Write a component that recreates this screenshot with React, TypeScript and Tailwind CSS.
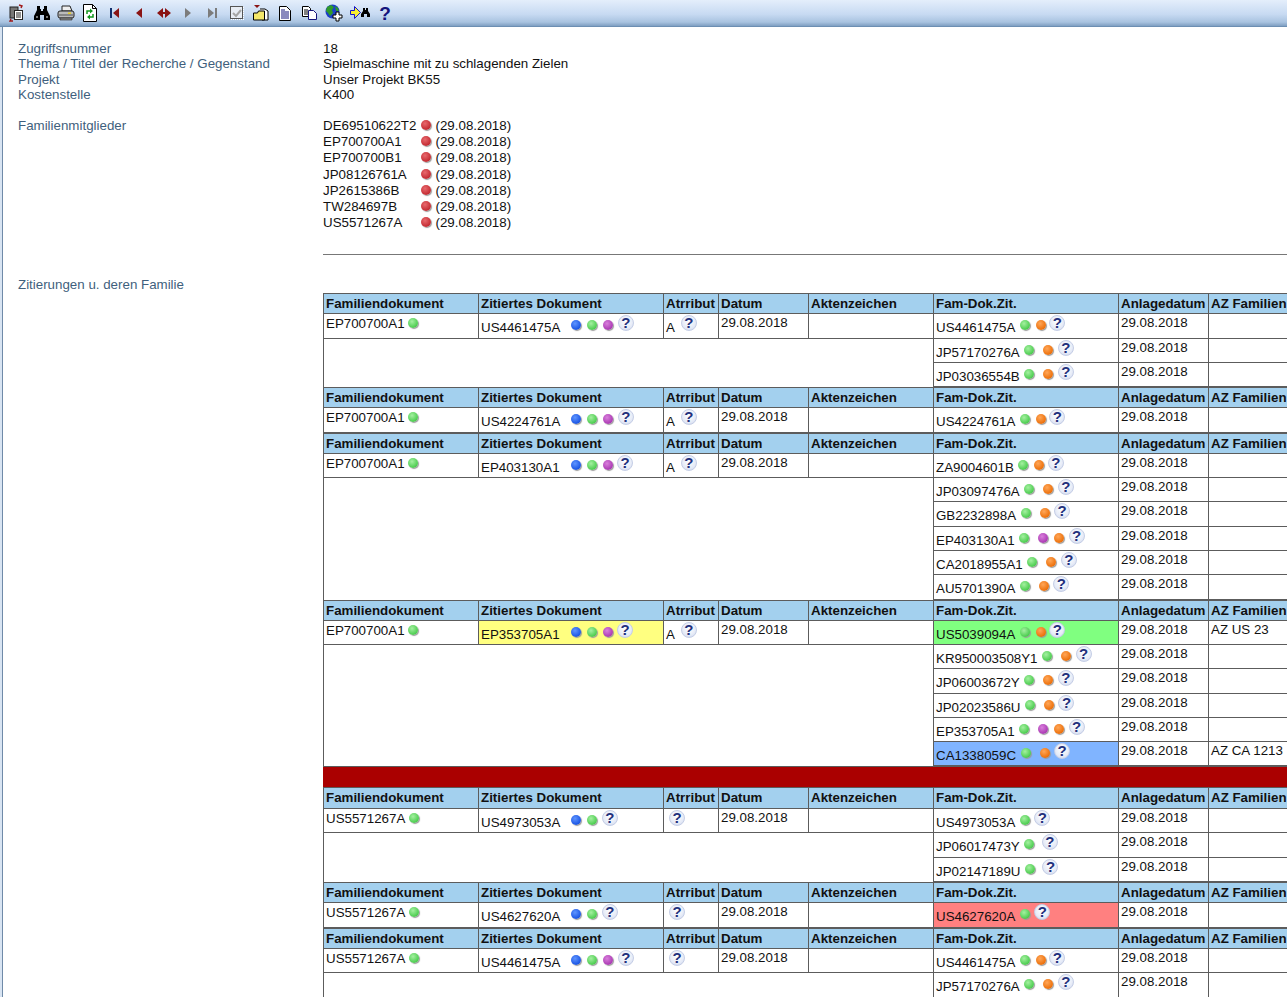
import React from "react";

const font = "font-['Liberation_Sans',Arial,sans-serif]";

type DotColor = "b" | "g" | "p" | "o" | "r";

const dotClass: Record<DotColor, string> = {
	b: "bg-[radial-gradient(circle_at_40%_35%,#5f95ff,#1f5ae6_65%,#1746b8)]",
	g: "bg-[radial-gradient(circle_at_40%_35%,#a4f0a0,#52cf55_65%,#33a53a)]",
	p: "bg-[radial-gradient(circle_at_40%_35%,#d97fdc,#ae3fb6_65%,#8c2c96)]",
	o: "bg-[radial-gradient(circle_at_40%_35%,#ffa658,#ee7410_65%,#c65a08)]",
	r: "bg-[radial-gradient(circle_at_40%_35%,#e8696d,#c62f36_65%,#a0222a)]",
};

function Dot({ color, className = "" }: { color: DotColor; className?: string }) {
	return (
		<span
			className={`inline-block h-[10px] w-[10px] shrink-0 rounded-full shadow-[1px_1px_1px_#9a9a9a] ${dotClass[color]} ${className}`}
		/>
	);
}

function Help({ className = "" }: { className?: string }) {
	return (
		<span
			className={`flex h-4 w-4 shrink-0 items-center justify-center rounded-full border border-[#c5cee6] bg-[radial-gradient(circle_at_50%_40%,#ffffff,#e6ebf7_60%,#c3cde8)] text-[15px] leading-none font-bold text-[#22307c] ${className}`}
		>
			?
		</span>
	);
}

// toolbar drawings
const ToolIcons = [
	<svg key="form" width="18" height="18" viewBox="0 0 18 18">
		<rect x="2" y="3" width="8" height="11" fill="#777" stroke="#222" />
		<rect x="6.5" y="6.5" width="8" height="9" fill="#fff" stroke="#222" />
		<path d="M8 9h5M8 11h5M8 13h5" stroke="#222" />
		<path d="M11 1l3 1-1 2M3 15l-1 2 3 0" stroke="#a01818" strokeWidth="1.4" fill="none" />
	</svg>,
	<svg key="find" width="16" height="16" viewBox="0 0 16 16">
		<path d="M3 1h3v3h1v2h2V4h1V1h3v4l3 6v4H10v-5H6v5H0v-4l3-6z" fill="#000" />
		<path d="M2 11h2v2H2zM12 11h2v2h-2z" fill="#777" />
	</svg>,
	<svg key="print" width="18" height="16" viewBox="0 0 18 16">
		<path d="M5 1h8l2 5H5z" fill="#eee" stroke="#222" />
		<rect x="1" y="6" width="16" height="7" rx="2" fill="#bbb" stroke="#222" />
		<path d="M2 10h14" stroke="#555" />
		<rect x="11" y="7.5" width="3" height="1.5" fill="#e8d020" />
		<path d="M3 13h12v2H3z" fill="#888" stroke="#222" strokeWidth=".6" />
	</svg>,
	<svg key="refresh" width="14" height="18" viewBox="0 0 14 18">
		<path d="M.5.5h9l4 4v13H.5z" fill="#fff" stroke="#000" />
		<path d="M9.5.5v4h4" fill="none" stroke="#000" />
		<path d="M4 10V7h3" stroke="#12961e" strokeWidth="1.5" fill="none" />
		<path d="M7 4.5v5l3-2.5zM7 10.5v5l-3-2.5z" fill="#12961e" />
		<path d="M10 10v3H7" stroke="#12961e" strokeWidth="1.5" fill="none" />
	</svg>,
	<svg key="first" width="10" height="10" viewBox="0 0 10 10">
		<rect x="0" y="0" width="2" height="10" fill="#12306e" />
		<path d="M9 0v10L3 5z" fill="#8a1414" />
	</svg>,
	<svg key="prev" width="6" height="10" viewBox="0 0 6 10">
		<path d="M6 0v10L0 5z" fill="#8a1414" />
	</svg>,
	<svg key="both" width="14" height="10" viewBox="0 0 14 10">
		<path d="M6 0v10L0 5zM8 0v10l6-5z" fill="#8a1414" />
		<rect x="4" y="4" width="6" height="2" fill="#8a1414" />
	</svg>,
	<svg key="next" width="6" height="10" viewBox="0 0 6 10">
		<path d="M0 0v10l6-5z" fill="#7c7c7c" />
	</svg>,
	<svg key="last" width="10" height="10" viewBox="0 0 10 10">
		<path d="M1 0v10l6-5z" fill="#7c7c7c" />
		<rect x="8" y="0" width="2" height="10" fill="#7c7c7c" />
	</svg>,
	<svg key="check" width="14" height="14" viewBox="0 0 14 14">
		<rect x=".5" y=".5" width="12" height="12" fill="#e8edf4" stroke="#555" />
		<path d="M3 7l3 3 5-6" stroke="#a5a5a5" strokeWidth="2" fill="none" />
		<path d="M1 13.5h13M13.5 1v13" stroke="#fff" strokeDasharray="1 1" />
	</svg>,
	<svg key="open" width="16" height="16" viewBox="0 0 16 16">
		<path d="M1 0h6L4 3z" fill="#8a1414" />
		<path d="M7 4h5l3 2v9H9" fill="#fff" stroke="#000" />
		<path d="M.5 8h4l1-2h6v9H.5z" fill="#f4e76a" stroke="#000" />
	</svg>,
	<svg key="doc" width="12" height="15" viewBox="0 0 12 15">
		<path d="M.5.5h7l4 4v10H.5z" fill="#fff" stroke="#000" />
		<path d="M2 4h4M2 6h8M2 8h8M2 10h8M2 12h8" stroke="#15157c" />
	</svg>,
	<svg key="copy" width="16" height="14" viewBox="0 0 16 14">
		<path d="M.5.5h6l2 2v8H.5z" fill="#fff" stroke="#000" />
		<path d="M2 4h4M2 6h4M2 8h4" stroke="#000" />
		<path d="M6.5 4.5h5l3 3v6h-8z" fill="#fff" stroke="#15157c" />
	</svg>,
	<svg key="globe" width="18" height="18" viewBox="0 0 18 18">
		<circle cx="7.5" cy="7.5" r="7" fill="#1c40c8" />
		<path d="M2 3l4-2 3 2-2 3 1 3-3 3-2-3-2-2zM10 2l3 2 1 3-3 0z" fill="#2f9a2a" />
		<path d="M11 8h3v3h3v3h-3v3h-3v-3H8v-3h3z" fill="#fff" stroke="#000" />
	</svg>,
	<svg key="findnext" width="21" height="14" viewBox="0 0 21 14">
		<path d="M.5 4.5h4v-4l6 6-6 6v-4h-4z" fill="#f8ee30" stroke="#1414c8" />
		<path d="M13 2h2v2h1V2h2v3l2 3v3h-3V8h-3v3h-3V8l2-3z" fill="#000" />
	</svg>,
];

type Cite = {
	name: string;
	dots: DotColor[];
	wide?: boolean;
	bg?: string;
	h: string;
};

type Group = {
	member: string;
	doc: string;
	docDots: DotColor[];
	docBg?: string;
	attr?: string;
	hdr?: string;
	rows: Cite[];
	az?: Record<number, string>;
};

const g4 = "h-[24px]";
const g5 = "h-[25px]";

const groups: Group[] = [
	{
		member: "EP700700A1",
		doc: "US4461475A",
		docDots: ["b", "g", "p"],
		attr: "A",
		rows: [
			{ name: "US4461475A", dots: ["g", "o"], h: g5 },
			{ name: "JP57170276A", dots: ["g", "o"], wide: true, h: g4 },
			{ name: "JP03036554B", dots: ["g", "o"], wide: true, h: g4 },
		],
	},
	{
		member: "EP700700A1",
		doc: "US4224761A",
		docDots: ["b", "g", "p"],
		attr: "A",
		rows: [{ name: "US4224761A", dots: ["g", "o"], h: g5 }],
	},
	{
		member: "EP700700A1",
		doc: "EP403130A1",
		docDots: ["b", "g", "p"],
		attr: "A",
		rows: [
			{ name: "ZA9004601B", dots: ["g", "o"], h: g4 },
			{ name: "JP03097476A", dots: ["g", "o"], wide: true, h: g4 },
			{ name: "GB2232898A", dots: ["g", "o"], wide: true, h: g5 },
			{ name: "EP403130A1", dots: ["g", "p", "o"], wide: true, h: g4 },
			{ name: "CA2018955A1", dots: ["g", "o"], wide: true, h: g4 },
			{ name: "AU5701390A", dots: ["g", "o"], wide: true, h: g5 },
		],
	},
	{
		member: "EP700700A1",
		doc: "EP353705A1",
		docDots: ["b", "g", "p"],
		docBg: "bg-[#ffff80]",
		attr: "A",
		rows: [
			{ name: "US5039094A", dots: ["g", "o"], bg: "bg-[#80ff80]", h: g4 },
			{ name: "KR950003508Y1", dots: ["g", "o"], wide: true, h: g4 },
			{ name: "JP06003672Y", dots: ["g", "o"], wide: true, h: g5 },
			{ name: "JP02023586U", dots: ["g", "o"], wide: true, h: g4 },
			{ name: "EP353705A1", dots: ["g", "p", "o"], wide: true, h: g4 },
			{ name: "CA1338059C", dots: ["g", "o"], wide: true, bg: "bg-[#80b4ff]", h: g4 },
		],
		az: { 0: "AZ US 23", 5: "AZ CA 1213" },
	},
	{
		member: "US5571267A",
		doc: "US4973053A",
		docDots: ["b", "g"],
		hdr: "h-[21px]",
		rows: [
			{ name: "US4973053A", dots: ["g"], h: g4 },
			{ name: "JP06017473Y", dots: ["g"], wide: true, h: g5 },
			{ name: "JP02147189U", dots: ["g"], wide: true, h: g4 },
		],
	},
	{
		member: "US5571267A",
		doc: "US4627620A",
		docDots: ["b", "g"],
		rows: [{ name: "US4627620A", dots: ["g"], bg: "bg-[#ff8080]", h: g5 }],
	},
	{
		member: "US5571267A",
		doc: "US4461475A",
		docDots: ["b", "g", "p"],
		rows: [
			{ name: "US4461475A", dots: ["g", "o"], h: g4 },
			{ name: "JP57170276A", dots: ["g", "o"], wide: true, h: g5 },
		],
	},
];

const heads = [
	"Familiendokument",
	"Zitiertes Dokument",
	"Atrribut",
	"Datum",
	"Aktenzeichen",
	"Fam-Dok.Zit.",
	"Anlagedatum",
	"AZ Familien",
];

const members = [
	"DE69510622T2",
	"EP700700A1",
	"EP700700B1",
	"JP08126761A",
	"JP2615386B",
	"TW284697B",
	"US5571267A",
];

const cell = "border-r border-b border-[#5c5c5c] p-0 align-top";
const hcell = "border-r border-b border-[#5c5c5c] bg-[#a3d0ee] px-[2px] pt-px pb-0 text-left align-middle text-[13.33px] leading-4 font-bold whitespace-nowrap";

function FamCell({ row }: { row: Cite }) {
	const single = row.dots.length === 1;
	return (
		<div className={`flex h-full items-start pl-[2px] ${row.bg ?? ""}`}>
			<span className="mt-[6px] leading-4">{row.name}</span>
			{row.dots.map((d, i) => (
				<Dot
					key={i}
					color={d}
					className={`mt-[6px] ${i === 0 ? "ml-[4.5px]" : i === 1 && row.wide ? "ml-[9px]" : "ml-[6px]"}`}
				/>
			))}
			<Help className={`mt-[1px] ${single ? (row.wide ? "ml-[7.5px]" : "ml-[4.5px]") : row.wide ? "ml-[4.5px]" : "ml-[3.5px]"}`} />
		</div>
	);
}

function GroupTable({ group }: { group: Group }) {
	return (
		<table className="w-[1085px] table-fixed border-separate border-spacing-0 border-t border-l border-[#5c5c5c] text-[13.33px] text-[#111]">
			<colgroup>
				<col className="w-[155px]" />
				<col className="w-[185px]" />
				<col className="w-[55px]" />
				<col className="w-[90px]" />
				<col className="w-[125px]" />
				<col className="w-[185px]" />
				<col className="w-[90px]" />
				<col className="w-[200px]" />
			</colgroup>
			<tbody>
				<tr className={group.hdr ?? "h-[20px]"}>
					{heads.map((h) => (
						<th key={h} className={hcell}>
							{h}
						</th>
					))}
				</tr>
				{group.rows.map((row, i) => (
					<tr key={row.name} className={row.h}>
						{i === 0 ? (
							<>
								<td className={cell}>
									<div className="flex items-start pl-[2px]">
										<span className="mt-[2px] leading-4">{group.member}</span>
										<Dot color="g" className="mt-[4px] ml-[3.5px]" />
									</div>
								</td>
								<td className={`${cell} ${group.docBg ?? ""}`}>
									<div className="flex items-start pl-[2px]">
										<span className="mt-[6px] leading-4">{group.doc}</span>
										{group.docDots.map((d, j) => (
											<Dot key={j} color={d} className={`mt-[6px] ${j === 0 ? "ml-[11px]" : "ml-[6px]"}`} />
										))}
										<Help className="mt-[1px] ml-[4.5px]" />
									</div>
								</td>
								<td className={cell}>
									<div className="flex items-start pl-[2px]">
										{group.attr ? (
											<>
												<span className="mt-[6px] leading-4">{group.attr}</span>
												<Help className="mt-[1px] ml-[6px]" />
											</>
										) : (
											<Help className="mt-[1px] ml-[3px]" />
										)}
									</div>
								</td>
								<td className={`${cell} pl-[2px]`}>
									<div className="mt-[1px] leading-4">29.08.2018</div>
								</td>
								<td className={cell} />
							</>
						) : (
							<td colSpan={5} className="border-r border-[#5c5c5c] p-0" />
						)}
						<td className={`${cell} h-[inherit]`}>
							<FamCell row={row} />
						</td>
						<td className={`${cell} pl-[2px]`}>
							<div className="mt-[1px] leading-4">29.08.2018</div>
						</td>
						<td className={`${cell} pl-[2px]`}>
							<div className="mt-[1px] leading-4 whitespace-nowrap">{group.az?.[i] ?? ""}</div>
						</td>
					</tr>
				))}
			</tbody>
		</table>
	);
}

export default function App() {
	return (
		<div className={`flex h-[997px] w-[1287px] flex-col overflow-hidden bg-white ${font}`}>
			<div className="flex h-[27px] shrink-0 items-center border-b border-[#6d8fb3] bg-[linear-gradient(#e4eefb,#c7daf2_55%,#a9c3e0_85%,#7f9fc2)] pl-[5px]">
				{ToolIcons.map((icon, i) => (
					<span
						key={i}
						className={`flex h-[18px] w-[24.4px] shrink-0 items-center justify-center ${i === 14 ? "ml-[2px]" : ""}`}
					>
						{icon}
					</span>
				))}
				<span className="flex w-[24.4px] justify-center text-[19px] leading-none font-bold text-[#14147c]">?</span>
			</div>

			<div className="flex min-h-0 flex-1 border-l-[2px] border-[#d8e4f2]">
				<div className="min-w-0 flex-1 border-l-[1px] border-[#6f8aa8] pt-[14px] text-[13.33px] text-[#111]">
					<div className="grid grid-cols-[305px_1fr] pl-[15px] leading-[15.33px]">
						<div className="text-[#3f5f7d]">
							<div>Zugriffsnummer</div>
							<div>Thema / Titel der Recherche / Gegenstand</div>
							<div>Projekt</div>
							<div>Kostenstelle</div>
						</div>
						<div>
							<div>18</div>
							<div>Spielmaschine mit zu schlagenden Zielen</div>
							<div>Unser Projekt BK55</div>
							<div>K400</div>
						</div>
					</div>

					<div className="mt-[15.5px] grid grid-cols-[305px_1fr] pl-[15px] leading-[16.25px]">
						<div className="text-[#3f5f7d]">Familienmitglieder</div>
						<div>
							{members.map((m) => (
								<div key={m} className="flex h-[16.25px] items-center">
									<span className="w-[97.5px]">{m}</span>
									<Dot color="r" className="mb-[2px]" />
									<span className="ml-[5px]">(29.08.2018)</span>
								</div>
							))}
						</div>
					</div>

					<div className="mt-[22px] ml-[320px] h-px bg-[#777]" />

					<div className="mt-[22px] grid grid-cols-[305px_1fr] pl-[15px]">
						<div className="leading-4 text-[#3f5f7d]">Zitierungen u. deren Familie</div>
						<div className="mt-[16px] h-[720px] overflow-hidden">
							{groups.map((g, i) => (
								<React.Fragment key={i}>
									{i === 4 && <div className="h-[21px] border-t border-[#5c5c5c] bg-[#aa0000]" />}
									<GroupTable group={g} />
								</React.Fragment>
							))}
						</div>
					</div>
				</div>
			</div>
		</div>
	);
}
